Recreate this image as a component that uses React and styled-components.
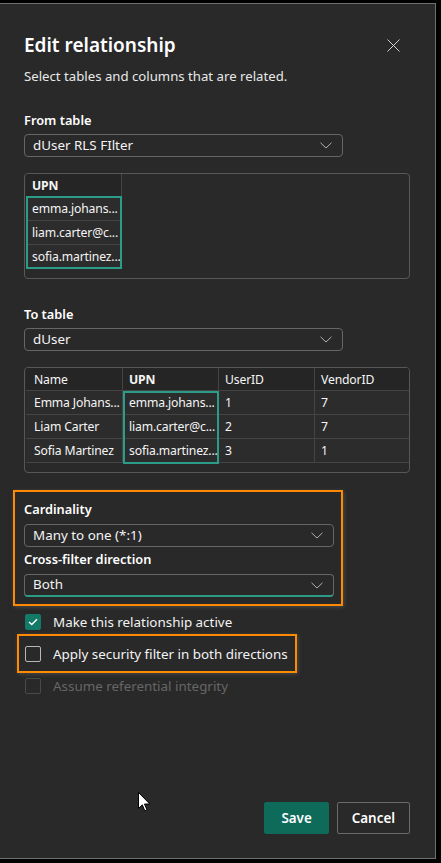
import styled, { createGlobalStyle } from "styled-components";

const GlobalStyle = createGlobalStyle`
  html, body {
    margin: 0;
    padding: 0;
    background: #000;
  }
  body {
    font-family: "Noto Sans", "Open Sans", sans-serif;
    color: #f3f3f3;
  }
`;

const Panel = styled.div`
  position: relative;
  box-sizing: border-box;
  margin: 3px 0 0 -1px;
  width: 437px;
  height: 856px;
  border: 1px solid #707070;
  background: #292929;
  padding: 27px 25px 24px 24px;
  display: flex;
  flex-direction: column;
  overflow: hidden;
`;

const Header = styled.div`
  display: flex;
  justify-content: space-between;
  align-items: center;
  height: 28px;
`;

const Title = styled.h1`
  margin: 0;
  font-size: 19px;
  font-weight: 600;
  color: #fff;
  line-height: 28px;
`;

const CloseButton = styled.button`
  display: flex;
  align-items: center;
  justify-content: center;
  width: 16px;
  height: 16px;
  margin-right: 9px;
  padding: 0;
  border: none;
  background: none;
  cursor: pointer;
`;

const Subtitle = styled.p`
  margin: 7px 0 0;
  font-size: 13.2px;
  line-height: 20px;
  color: #e8e8e8;
`;

const Label = styled.div`
  margin-top: ${(p) => p.$top ?? 25}px;
  font-size: 12.8px;
  font-weight: 600;
  line-height: 18px;
  color: #fff;
`;

const Select = styled.div`
  box-sizing: border-box;
  margin-top: ${(p) => p.$top ?? 5}px;
  width: ${(p) => p.$width ?? 319}px;
  height: 23px;
  border: 1px solid #666;
  border-bottom: ${(p) => (p.$focused ? "2px solid #2d9c86" : "1px solid #666")};
  border-radius: 4px;
  display: flex;
  align-items: center;
  justify-content: space-between;
  padding: 0 10px 0 8px;
  font-size: 13.4px;
  color: #f3f3f3;
  line-height: 1;
`;

const Preview = styled.div`
  box-sizing: border-box;
  margin-top: 16px;
  width: 386px;
  height: 106px;
  border: 1px solid #575757;
  border-radius: 4px;
  padding: 0 0 0 1px;
  overflow: hidden;
`;

const Grid = styled.div`
  display: grid;
  grid-template-columns: ${(p) => p.$cols};
  position: relative;
`;

const Cell = styled.div`
  box-sizing: border-box;
  height: ${(p) => (p.$head ? 23 : 24)}px;
  padding: 0 4px 0 ${(p) => p.$pad ?? 6}px;
  display: flex;
  align-items: center;
  font-size: 12.2px;
  letter-spacing: -0.15px;
  font-weight: ${(p) => (p.$bold ? 700 : 400)};
  color: #f5f5f5;
  background: ${(p) => (p.$head ? "#252525" : "#2c2c2c")};
  border-right: 1px solid #444;
  border-bottom: 1px solid #444;
  white-space: nowrap;
  overflow: hidden;
`;

const ColumnHighlight = styled.div`
  position: absolute;
  pointer-events: none;
  border: 2px solid #2a9c87;
  box-sizing: border-box;
`;

const Highlight = styled.div`
  box-sizing: border-box;
  margin: 17px 0 0 -11px;
  width: 330px;
  border: 2px solid #ff8a00;
  padding: 8px 7px 7px 9px;
  box-shadow: 1px 1px 4px rgba(110, 110, 110, 0.5);
`;

const Checks = styled.div`
  display: flex;
  flex-direction: column;
  align-items: flex-start;
`;

const CheckRow = styled.label`
  position: relative;
  display: flex;
  align-items: center;
  gap: 12px;
  height: 32px;
  padding-left: 1px;
  font-size: 13.4px;
  color: ${(p) => (p.$disabled ? "#666" : "#f3f3f3")};

  ${(p) =>
    p.$outlined &&
    `
    &::after {
      content: "";
      position: absolute;
      left: -7px;
      right: -9px;
      top: -4px;
      bottom: -3px;
      border: 2px solid #ff8a00;
      box-shadow: 1px 1px 4px rgba(110, 110, 110, 0.5);
    }
  `}
`;

const Box = styled.span`
  box-sizing: border-box;
  width: 16px;
  height: 16px;
  border-radius: 2px;
  display: flex;
  align-items: center;
  justify-content: center;
  background: ${(p) => (p.$checked ? "#137a67" : "transparent")};
  border: 1px solid
    ${(p) => (p.$checked ? "#137a67" : p.$disabled ? "#4a4a4a" : "#b8b8b8")};
`;

const Footer = styled.div`
  margin-top: auto;
  display: flex;
  justify-content: flex-end;
  gap: 8px;
`;

const Button = styled.button`
  box-sizing: border-box;
  height: 32px;
  padding: 0 ${(p) => (p.$primary ? 16 : 14)}px;
  border-radius: 2px;
  font-family: inherit;
  font-size: 13.4px;
  font-weight: 600;
  color: #fff;
  background: ${(p) => (p.$primary ? "#0e6b5a" : "transparent")};
  border: 1px solid ${(p) => (p.$primary ? "#0e6b5a" : "#6a6a6a")};
  cursor: pointer;
`;

const Pointer = styled.svg`
  position: absolute;
  left: 138px;
  top: 788px;
`;

const Chevron = () => (
  <svg width="12" height="7" viewBox="0 0 12 7">
    <path d="M0.5 0.8 L6 6 L11.5 0.8" fill="none" stroke="#b0b0b0" strokeWidth="1" />
  </svg>
);

// values as the grid shows them, already cut to the column width
const fromRows = ["emma.johans...", "liam.carter@c...", "sofia.martinez..."];

const toRows = [
  ["Emma Johans...", "emma.johans...", "1", "7"],
  ["Liam Carter", "liam.carter@c...", "2", "7"],
  ["Sofia Martinez", "sofia.martinez...", "3", "1"],
];

const App = () => {
  return (
    <>
      <GlobalStyle />
      <Panel>
        <Header>
          <Title>Edit relationship</Title>
          <CloseButton aria-label="Close">
            <svg width="13" height="13" viewBox="0 0 13 13">
              <path d="M0.5 0.5 L12.5 12.5 M12.5 0.5 L0.5 12.5" stroke="#cfcfcf" strokeWidth="1" />
            </svg>
          </CloseButton>
        </Header>
        <Subtitle>Select tables and columns that are related.</Subtitle>

        <Label>From table</Label>
        <Select>
          <span>dUser RLS FIlter</span>
          <Chevron />
        </Select>
        <Preview>
          <Grid $cols="96px">
            <Cell $head $bold>UPN</Cell>
            {fromRows.map((r) => (
              <Cell key={r}>{r}</Cell>
            ))}
            <ColumnHighlight style={{ left: 0, top: 22, width: 96, height: 73 }} />
          </Grid>
        </Preview>

        <Label $top={26}>To table</Label>
        <Select>
          <span>dUser</span>
          <Chevron />
        </Select>
        <Preview>
          <Grid $cols="97px 96px 96px 96px">
            <Cell $head $pad={8}>Name</Cell>
            <Cell $head $bold>UPN</Cell>
            <Cell $head>UserID</Cell>
            <Cell $head>VendorID</Cell>
            {toRows.map((r) =>
              r.map((v, i) => (
                <Cell key={r[0] + i} $pad={i === 0 ? 8 : 6}>{v}</Cell>
              ))
            )}
            <ColumnHighlight style={{ left: 97, top: 23, width: 96, height: 73 }} />
          </Grid>
        </Preview>

        <Highlight>
          <Label $top={0}>Cardinality</Label>
          <Select $top={6} $width={310}>
            <span>Many to one (*:1)</span>
            <Chevron />
          </Select>
          <Label $top={3}>Cross-filter direction</Label>
          <Select $top={6} $width={310} $focused>
            <span>Both</span>
            <Chevron />
          </Select>
        </Highlight>

        <Checks>
          <CheckRow>
            <Box $checked>
              <svg width="10" height="8" viewBox="0 0 10 8">
                <path d="M1 4 L3.8 6.6 L9 1.2" fill="none" stroke="#fff" strokeWidth="1.4" />
              </svg>
            </Box>
            Make this relationship active
          </CheckRow>
          <CheckRow $outlined>
            <Box />
            Apply security filter in both directions
          </CheckRow>
          <CheckRow $disabled>
            <Box $disabled />
            Assume referential integrity
          </CheckRow>
        </Checks>

        <Footer>
          <Button $primary>Save</Button>
          <Button>Cancel</Button>
        </Footer>

        <Pointer width="13" height="21" viewBox="0 0 13 21">
          <path d="M0.5 0.5 L0.5 16.5 L4.3 12.8 L6.8 18.8 L9 17.9 L6.5 12 L11.8 12 Z" fill="#fff" stroke="#000" strokeWidth="1" />
        </Pointer>
      </Panel>
    </>
  );
};

export default App;
